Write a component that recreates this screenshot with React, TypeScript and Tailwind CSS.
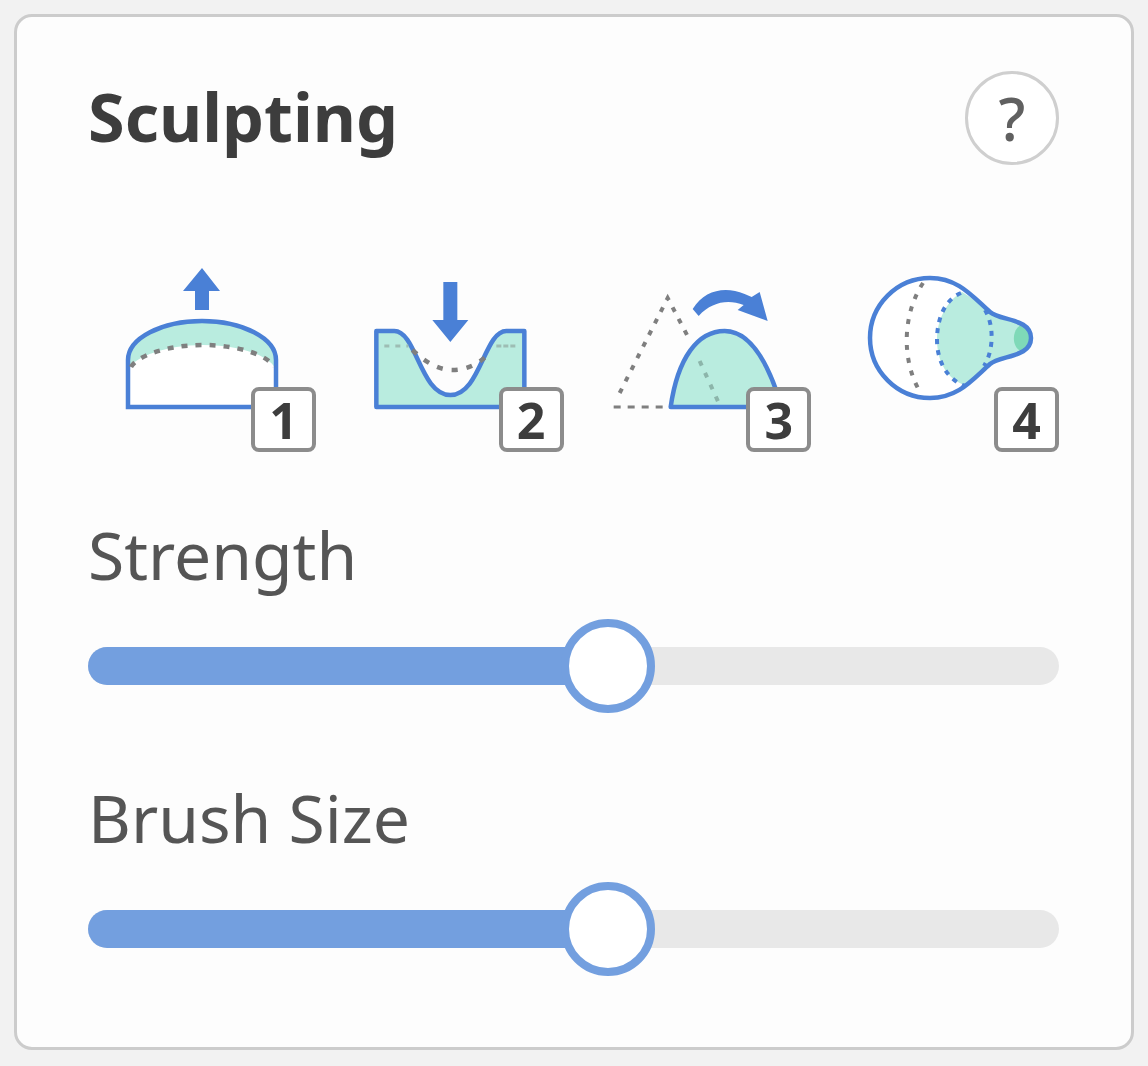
const sliders = [
  { label: "Strength", value: 53.6 },
  { label: "Brush Size", value: 53.6 },
];

const BLUE = "#4a80d6";
const MINT = "#b9ecdf";
const DASH = "#7f7f7f";

const PINCH_OUTLINE =
  "M930 278C958 278 972 296 990 312C1000 321 1031 318 1031 338C1031 358 1000 355 990 364C972 380 958 398 930 398C897 398 870 371 870 338C870 305 897 278 930 278Z";

function RaiseIcon() {
  return (
    <svg viewBox="88 255 228 197" className="h-full w-full">
      <path d="M128 407V360C128 338 162 321 202 321C242 321 276 338 276 360V407Z" fill="#fff" />
      <path d="M129 368C136 357 165 345 203 345C238 345 268 355 275 368V360C275 339 242 322 202 322C162 322 129 339 129 360Z" fill={MINT} />
      <path d="M128 407V360C128 338 162 321 202 321C242 321 276 338 276 360V407Z" fill="none" stroke={BLUE} strokeWidth="4.5" />
      <path d="M131 367C136 357 165 345 203 345C238 345 268 355 274 367" fill="none" stroke={DASH} strokeWidth="4.5" strokeDasharray="6 8" />
      <path d="M202 268L220 291H209V310H195V291H183Z" fill={BLUE} />
    </svg>
  );
}

function LowerIcon() {
  return (
    <svg viewBox="335.67 255 228 197" className="h-full w-full">
      <path d="M376 331H394C416 331 420 395 450 395C480 395 484 331 506 331H524V407H376Z" fill={MINT} stroke={BLUE} strokeWidth="4.5" strokeLinejoin="round" />
      <path d="M384 346H408" fill="none" stroke="#9dbdb4" strokeWidth="3" strokeDasharray="5 6" />
      <path d="M496 346H515" fill="none" stroke="#9dbdb4" strokeWidth="3" strokeDasharray="5 2" />
      <path d="M412 350C425 362 438 370 452 370C466 370 478 364 486 356" fill="none" stroke={DASH} strokeWidth="4.5" strokeDasharray="6 9" />
      <path d="M443 282H457V320H468L450 342L432 320H443Z" fill={BLUE} />
    </svg>
  );
}

function TiltIcon() {
  return (
    <svg viewBox="583.33 255 228 197" className="h-full w-full">
      <path d="M671 407C678 358 698 331 725 331C750 331 768 360 782 407Z" fill={MINT} stroke={BLUE} strokeWidth="4.5" strokeLinejoin="round" />
      <path d="M614 407H670" fill="none" stroke={DASH} strokeWidth="3" strokeDasharray="7 7" />
      <path d="M620 393L668 298L690 340" fill="none" stroke={DASH} strokeWidth="4" strokeDasharray="5 8" />
      <path d="M700 361L720 405" fill="none" stroke="#8cb5aa" strokeWidth="4" strokeDasharray="5 8" />
      <path d="M693 309C705 290 725 286 745 294L752 297L760 292L768 321L738 310L744 305C728 299 712 302 699 316Z" fill={BLUE} />
    </svg>
  );
}

function PinchIcon() {
  return (
    <svg viewBox="831 255 228 197" className="h-full w-full">
      <path d={PINCH_OUTLINE} fill="#fff" />
      <path d="M962 292C972 298 980 304 990 312C1000 321 1031 318 1031 338C1031 358 1000 355 990 364C980 372 973 380 965 385C948 380 937 362 937 340C937 318 948 300 962 292Z" fill={MINT} />
      <path d="M1021 325C1012 329 1011 347 1021 351C1033 348 1033 328 1021 325Z" fill="#7fd9b8" />
      <path d={PINCH_OUTLINE} fill="none" stroke={BLUE} strokeWidth="4.5" />
      <path d="M923 283C902 315 902 360 919 390" fill="none" stroke={DASH} strokeWidth="4" strokeDasharray="5 8" />
      <path d="M961 293C944 300 937 320 937 340C937 362 948 380 965 386" fill="none" stroke={BLUE} strokeWidth="4" strokeDasharray="5 6" />
      <path d="M985 310C994 325 994 350 984 366" fill="none" stroke={BLUE} strokeWidth="4" strokeDasharray="5 6" />
    </svg>
  );
}

const tools = [
  { key: "1", Icon: RaiseIcon },
  { key: "2", Icon: LowerIcon },
  { key: "3", Icon: TiltIcon },
  { key: "4", Icon: PinchIcon },
];

export default function App() {
  return (
    <div className="min-h-screen bg-[#f2f2f2] p-[14px] font-['Noto_Sans',sans-serif]">
      <div className="h-[1036px] rounded-[18px] border-[3px] border-[#cccccc] bg-[#fdfdfd] pl-[71px] pr-[72px] pt-[54px] blur-[0.7px]">
        {/* Header */}
        <div className="flex items-start justify-between">
          <h1 className="text-[66.5px] font-bold leading-[90px] text-[#3d3d3d]">Sculpting</h1>
          <button
            type="button"
            className="flex h-[94px] w-[94px] items-center justify-center rounded-full border-[3px] border-[#cfcfcf] bg-white text-[60px] font-medium leading-none text-[#606060]"
          >
            ?
          </button>
        </div>

        {/* Tools */}
        <div className="mt-[90px] grid grid-cols-4 gap-x-[19.67px]">
          {tools.map(({ key, Icon }) => (
            <div key={key} className="relative h-[197px]">
              <Icon />
              <span className="absolute bottom-0 right-0 flex h-[65px] w-[65px] items-center justify-center rounded-[8px] border-[4px] border-[#8c8c8c] bg-white text-[50px] font-bold leading-none text-[#3d3d3d]">
                {key}
              </span>
            </div>
          ))}
        </div>

        {/* Sliders */}
        <div className="mt-[69px] flex flex-col gap-y-[99px]">
          {sliders.map((s) => (
            <div key={s.label}>
              <div className="text-[66px] leading-[66px] text-[#555555]">{s.label}</div>
              <div className="relative mt-[60px] h-[38px] rounded-full bg-[#e8e8e8]">
                <div className="h-full rounded-l-full bg-[#739fdf]" style={{ width: `${s.value}%` }} />
                <div
                  className="absolute top-1/2 h-[94px] w-[94px] -translate-x-1/2 -translate-y-1/2 rounded-full border-[8px] border-[#739fdf] bg-white"
                  style={{ left: `${s.value}%` }}
                />
              </div>
            </div>
          ))}
        </div>
      </div>
    </div>
  );
}
